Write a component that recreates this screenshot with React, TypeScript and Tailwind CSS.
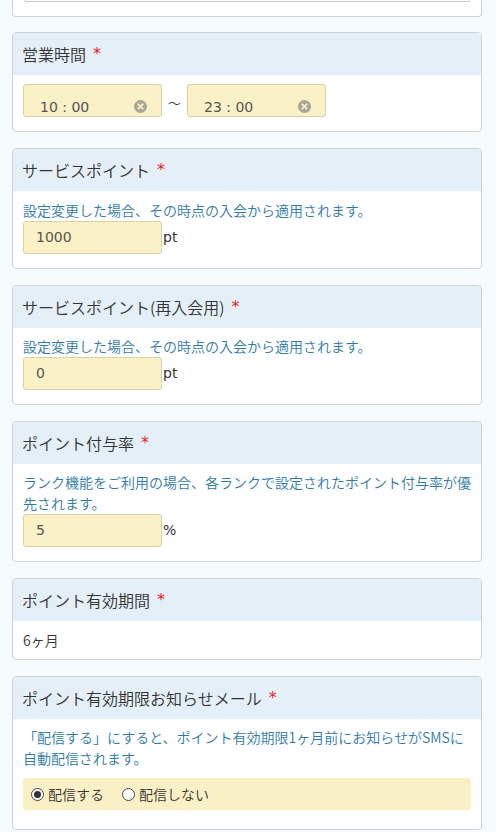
import React from "react";

const jp = { fontFamily: '"Noto Sans CJK JP", "DejaVu Sans", sans-serif' };
const latin = { fontFamily: '"DejaVu Sans", "Noto Sans CJK JP", sans-serif' };

function Card({
  title,
  children,
  bodyClass,
}: {
  title: string;
  children: React.ReactNode;
  bodyClass: string;
}) {
  return (
    <div className="mb-[16px] overflow-hidden rounded-[4px] border border-[#cfd3d6] bg-white">
      <div className="flex h-[42px] items-center bg-[#e4eff7] pl-[9px] text-[16px] leading-[22px] text-[#333]">
        <span>{title}</span>
        <span className="ml-[7px] font-normal text-[#e8231c]" style={latin}>
          *
        </span>
      </div>
      <div className={bodyClass}>{children}</div>
    </div>
  );
}

function Help({ children }: { children: React.ReactNode }) {
  return <p className="text-[14px] leading-[21px] text-[#2f7aa6]">{children}</p>;
}

function NumInput({ value, unit }: { value: string; unit: string }) {
  return (
    <div className="flex items-center font-normal" style={latin}>
      <div className="flex h-[33px] w-[139px] items-center rounded-[3px] border border-[#d8d0a8] bg-[#fbf1c7] pl-[12px] text-[14px] text-[#555]">
        {value}
      </div>
      <span className="ml-[1px] text-[14px] text-[#333]">{unit}</span>
    </div>
  );
}

function TimeInput({ value }: { value: string }) {
  return (
    <div
      className="flex h-[33px] w-[139px] items-start justify-between rounded-[3px] border border-[#d8d0a8] bg-[#fbf1c7] pl-[16px] pr-[14px] pt-[13px] text-[14px] font-normal leading-[18px] text-[#555]"
      style={latin}
    >
      <span>{value}</span>
      <svg className="mt-[2px]" width="13" height="13" viewBox="0 0 13 13">
        <circle cx="6.5" cy="6.5" r="6.5" fill="#aaa697" />
        <path d="M4.3 4.3l4.4 4.4M8.7 4.3l-4.4 4.4" stroke="#fbf1c7" strokeWidth="1.8" strokeLinecap="round" />
      </svg>
    </div>
  );
}

function Radio({ checked, label }: { checked: boolean; label: string }) {
  return (
    <div className="flex items-center">
      <span className="flex h-[13px] w-[13px] items-center justify-center rounded-full border border-[#444] bg-white">
        {checked && <span className="h-[7px] w-[7px] rounded-full bg-[#333]" />}
      </span>
      <span className="ml-[4px] text-[14px] leading-[20px] text-[#333]">{label}</span>
    </div>
  );
}

export default function App() {
  return (
    <div className="min-h-[832px] bg-[#f6fbfd] pl-[12px] pr-[14px] font-[350]" style={jp}>
      {/* partial card above */}
      <div className="mb-[15px] h-[17px] rounded-b-[4px] border border-t-0 border-[#cfd3d6] bg-white px-[11px]">
        <div className="h-[2px] rounded-b-[3px] border border-t-0 border-[#ccc] bg-white" />
      </div>

      <Card title="営業時間" bodyClass="px-[10px] pt-[9px] pb-[14px]">
        <div className="flex items-end">
          <TimeInput value="10 : 00" />
          <span className="mx-[6px] mb-[6px] text-[13px] leading-[16px] text-[#333]">〜</span>
          <TimeInput value="23 : 00" />
        </div>
      </Card>

      <Card title="サービスポイント" bodyClass="px-[10px] pt-[9px] pb-[14px]">
        <Help>設定変更した場合、その時点の入会から適用されます。</Help>
        <NumInput value="1000" unit="pt" />
      </Card>

      <Card title="サービスポイント(再入会用)" bodyClass="px-[10px] pt-[8px] pb-[14px]">
        <Help>設定変更した場合、その時点の入会から適用されます。</Help>
        <NumInput value="0" unit="pt" />
      </Card>

      <Card title="ポイント付与率" bodyClass="px-[10px] pt-[8px] pb-[14px]">
        <Help>ランク機能をご利用の場合、各ランクで設定されたポイント付与率が優先されます。</Help>
        <NumInput value="5" unit="%" />
      </Card>

      <Card title="ポイント有効期間" bodyClass="px-[10px] pt-[9px] pb-[8px]">
        <p className="text-[14px] leading-[21px] text-[#333]">6ヶ月</p>
      </Card>

      <Card title="ポイント有効期限お知らせメール" bodyClass="px-[10px] pt-[8px] pb-[19px]">
        <Help>「配信する」にすると、ポイント有効期限1ヶ月前にお知らせがSMSに自動配信されます。</Help>
        <div className="mt-[9px] flex h-[32px] items-center gap-[18px] rounded-[3px] bg-[#faf0c5] pl-[8px]">
          <Radio checked label="配信する" />
          <Radio checked={false} label="配信しない" />
        </div>
      </Card>
    </div>
  );
}
